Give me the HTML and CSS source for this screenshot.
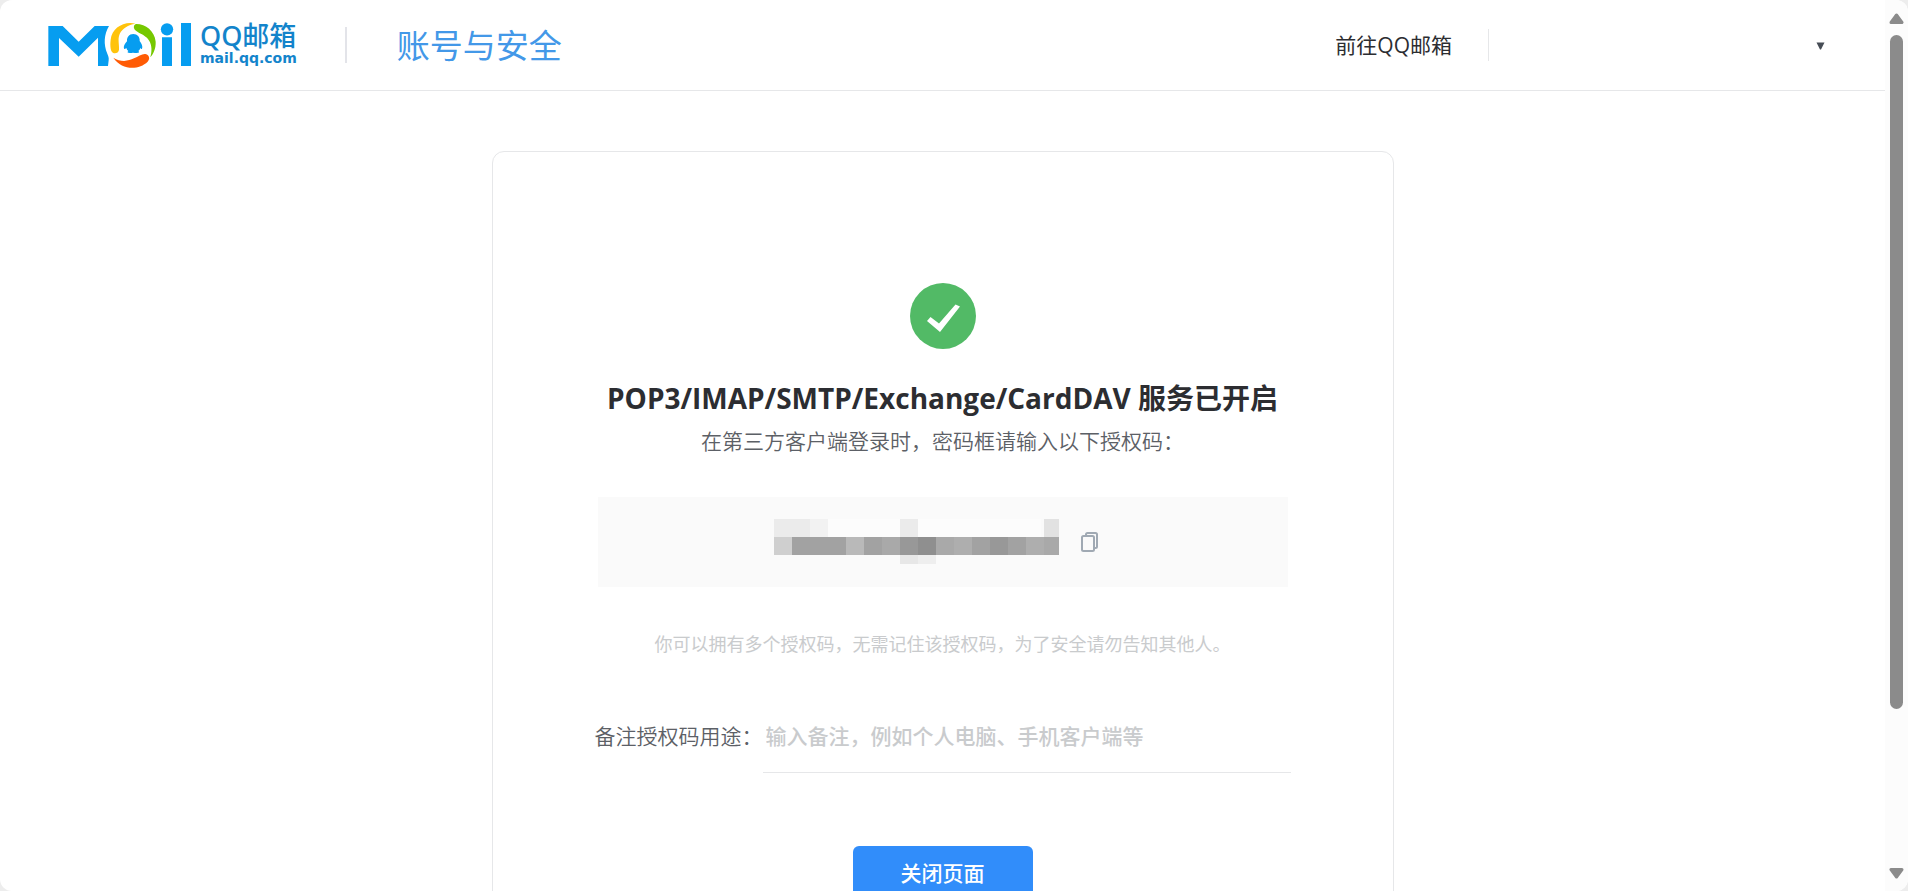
FILE: index.html
```html
<!DOCTYPE html>
<html lang="zh-CN">
<head>
<meta charset="utf-8">
<title>账号与安全</title>
<link rel="stylesheet" href="styles.css">
</head>
<body>
<div class="window">
  <div class="page">
    <header class="header">
      <a class="logo" href="#" aria-label="QQ邮箱">
        <svg class="logo-mark" viewBox="54 66 432 135" aria-hidden="true">
          <g fill="#069df0">
            <path d="M55 75H98L146 122L194 75H237C222 100 220 130 232 158C235 165 237 170 236 178L234 195H204V110L146 167L87 111V195H55Z"/>
            <circle cx="411" cy="85" r="18.500"/>
            <path d="M396 109H426V195H396ZM453 66H483V195H453Z"/>
            <path d="M310 99C297 99 290 109 291 121C284 128 279 138 283 144C286 144 288 142 289 141C290 145 292 148 295 150C289 155 295 157 309 155C325 157 331 155 325 150C328 148 330 145 331 141C333 144 335 145 336 143C339 137 335 127 329 120C330 108 322 99 310 99Z"/>
          </g>
          <path fill="#ffc30c" d="M316 68C280 60 246 82 242 116C240 132 241 146 246 153C252 160 266 157 267 146C268 127 262 114 270 97C278 82 294 72 316 68Z"/>
          <path fill="#76c800" d="M319 69C347 69 374 90 377 122C378 143 370 158 361 169C366 151 366 134 358 120C348 104 335 101 320 91C308 84 310 70 319 69Z"/>
          <path fill="#ff5b05" d="M250 170C272 184 295 181 312 172C325 166 336 158 346 159C358 161 361 173 353 182C326 208 276 208 250 170Z"/>
        </svg>
        <span class="logo-text">
          <span class="logo-name">QQ邮箱</span>
          <span class="logo-domain">mail.qq.com</span>
        </span>
      </a>
      <h1 class="site-title">账号与安全</h1>
      <nav class="nav">
        <a class="nav-link" href="#">前往QQ邮箱</a>
        <button class="account" type="button" aria-label="账号菜单">
          <svg class="caret" viewBox="0 0 9 8" aria-hidden="true"><path d="M.5 .5H8.500L5 7.500H4Z" fill="#464c55"/></svg>
        </button>
      </nav>
    </header>

    <main class="card">
      <svg class="success" viewBox="0 0 66 66" aria-hidden="true">
        <circle cx="33" cy="33" r="33" fill="#52ba66"/>
        <path d="M17 38L20.500 34L29 40.500L45.500 21.500L50 23.500L30 49Z" fill="#fff"/>
      </svg>
      <h2 class="card-title">POP3/IMAP/SMTP/Exchange/CardDAV 服务已开启</h2>
      <p class="card-subtitle">在第三方客户端登录时，密码框请输入以下授权码：</p>
      <div class="code-box">
        <svg class="code-mask" viewBox="0 0 285 45" shape-rendering="crispEdges" aria-hidden="true">
          <path fill="#fcfcfc" d="M54 0H267V18H54Z"/>
          <path fill="#ebebeb" d="M0 0H36V18H0ZM126 0H144V18H126Z"/>
          <path fill="#f2f2f2" d="M36 0H54V18H36Z"/>
          <path fill="#e2e2e2" d="M270 0H285V18H270Z"/>
          <path fill="#a2a2a2" d="M18 18H285V36H18Z"/>
          <path fill="#cfcfcf" d="M0 18H18V36H0Z"/>
          <path fill="#b9b9b9" d="M72 18H90V36H72Z"/>
          <path fill="#a9a9a9" d="M108 18H126V36H108ZM162 18H180V36H162ZM270 18H285V36H270Z"/>
          <path fill="#989898" d="M126 18H144V36H126ZM216 18H234V36H216Z"/>
          <path fill="#8f8f8f" d="M144 18H162V36H144Z"/>
          <path fill="#aeaeae" d="M180 18H198V36H180ZM252 18H270V36H252Z"/>
          <path fill="#e7e7e7" d="M126 36H144V45H126Z"/>
          <path fill="#eee" d="M144 36H162V45H144Z"/>
        </svg>
        <button class="copy" type="button" aria-label="复制授权码">
          <svg viewBox="0 0 18 20" aria-hidden="true" fill="#fafafa" stroke="#a0a9b3" stroke-width="2">
            <rect x="5" y="1" width="11" height="15" rx="1.500"/>
            <rect x="1" y="4" width="12" height="15" rx="1.500"/>
          </svg>
        </button>
      </div>
      <p class="hint">你可以拥有多个授权码，无需记住该授权码，为了安全请勿告知其他人。</p>
      <form class="remark">
        <label class="remark-label" for="remark">备注授权码用途：</label>
        <input class="remark-input" id="remark" type="text" placeholder="输入备注，例如个人电脑、手机客户端等">
      </form>
      <button class="close-button" type="button">关闭页面</button>
    </main>
  </div>

  <div class="scrollbar" aria-hidden="true">
    <svg class="scroll-arrow" viewBox="0 0 15 11"><path d="M7.500 2L13 9.500H2Z" fill="#8b8b8b" stroke="#8b8b8b" stroke-width="3" stroke-linejoin="round"/></svg>
    <div class="scroll-track"><div class="scroll-thumb"></div></div>
    <svg class="scroll-arrow" viewBox="0 0 15 11"><path d="M7.500 9L2 1.500H13Z" fill="#8b8b8b" stroke="#8b8b8b" stroke-width="3" stroke-linejoin="round"/></svg>
  </div>
</div>
</body>
</html>
```

FILE: styles.css
```css
* {
  box-sizing: border-box;
}

body {
  margin: 0;
  background: #ededed;
  color: #2c2d31;
  font-family: "Open Sans", "Noto Sans CJK SC", sans-serif;
  font-size: 21px;
}

h1, h2, p {
  margin: 0;
}

button {
  padding: 0;
  border: 0;
  background: none;
  font: inherit;
}

a {
  color: inherit;
  text-decoration: none;
}

svg {
  display: block;
  flex: none;
}

.window {
  display: flex;
  height: 100vh;
  overflow: hidden;
  border-radius: 12px;
  background: #fff;
}

.page {
  flex: 1;
  min-width: 0;
}

.header {
  display: flex;
  align-items: center;
  height: 91px;
  padding: 0 60px 0 48px;
  border-bottom: 1px solid #e6e7e9;
}

.logo {
  display: flex;
  align-items: center;
  gap: 8px;
  padding-right: 48px;
}

.logo-mark {
  width: 144px;
  height: 45px;
}

.logo-text {
  display: flex;
  flex-direction: column;
  color: #1384cb;
}

.logo-name {
  font-family: "Noto Sans", "Noto Sans CJK SC", sans-serif;
  font-size: 27px;
  font-weight: 500;
  line-height: 26px;
}

.logo-domain {
  font-family: "DejaVu Sans", sans-serif;
  font-size: 14px;
  font-weight: 700;
  line-height: 18px;
}

.site-title {
  padding: 2px 0 0 50px;
  border-left: 2px solid #e3e4e9;
  color: #4398e8;
  font-size: 33px;
  font-weight: 400;
  line-height: 34px;
}

.nav {
  display: flex;
  align-items: center;
  margin-left: auto;
}

.nav-link {
  padding-right: 36px;
  line-height: 32px;
}

.account {
  display: flex;
  align-items: center;
  justify-content: flex-end;
  width: 337px;
  height: 32px;
  padding-top: 2px;
  border-left: 1px solid #e6e7e9;
}

.caret {
  width: 9px;
  height: 8px;
}

.card {
  display: flex;
  flex-direction: column;
  align-items: center;
  width: 902px;
  max-width: 100%;
  margin: 60px auto;
  padding: 131px 100px 150px;
  border: 1px solid #e6e7e9;
  border-radius: 12px;
}

.success {
  width: 66px;
  height: 66px;
}

.card-title {
  margin-top: 29px;
  font-size: 28px;
  font-weight: 700;
  line-height: 40px;
  white-space: nowrap;
}

.card-subtitle {
  margin-top: 7px;
  color: #5c6066;
  font-weight: 350;
  line-height: 32px;
}

.code-box {
  display: flex;
  align-items: center;
  justify-content: center;
  gap: 22px;
  width: 690px;
  height: 90px;
  margin-top: 40px;
  padding: 0 12px 1px 0;
  background: #fafafa;
}

.code-mask {
  width: 285px;
  height: 45px;
}

.copy svg {
  width: 18px;
  height: 20px;
}

.hint {
  margin-top: 42px;
  color: #c9cbcd;
  font-size: 18px;
  line-height: 30px;
}

.remark {
  display: flex;
  align-items: center;
  margin-top: 40px;
}

.remark-label {
  color: #5c6066;
  font-weight: 350;
  line-height: 32px;
}

.remark-input {
  width: 528px;
  height: 74px;
  padding: 0 3px;
  border: 0;
  border-bottom: 1px solid #e6e7e9;
  background: none;
  font: inherit;
}

.remark-input::placeholder {
  color: #c9cbcd;
  font-weight: 500;
}

.close-button {
  width: 180px;
  height: 54px;
  margin-top: 73px;
  padding-bottom: 2px;
  border-radius: 6px;
  background: #318dfa;
  color: #fff;
  font-weight: 500;
}

.scrollbar {
  display: flex;
  flex-direction: column;
  align-items: center;
  width: 23px;
  padding: 13px 0 12px;
  background: #fcfcfc;
}

.scroll-arrow {
  width: 15px;
  height: 11px;
}

.scroll-track {
  flex: 1;
  padding: 11px 0;
}

.scroll-thumb {
  width: 13px;
  height: 82%;
  border-radius: 7px;
  background: #8b8b8b;
}
```
